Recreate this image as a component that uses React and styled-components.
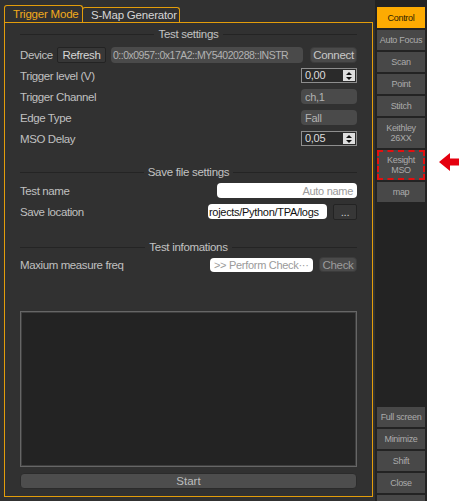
import React from 'react';
import styled, { createGlobalStyle } from 'styled-components';

const GlobalStyle = createGlobalStyle`
  html, body {
    margin: 0;
    padding: 0;
    background: #ffffff;
  }

  body {
    font-family: "Liberation Sans", Arial, sans-serif;
  }
`;

const ORANGE = '#e39d0b';

const Screen = styled.div`
  display: flex;
  width: 470px;
  height: 501px;
  overflow: hidden;
`;

const Main = styled.div`
  width: 375px;
  height: 501px;
  box-sizing: border-box;
  padding: 5px 2px 4px 4px;
  background: #313131;
  display: flex;
  flex-direction: column;
`;

const TabBar = styled.div`
  display: flex;
  align-items: flex-end;
  height: 17px;
  flex-shrink: 0;
`;

const Tab = styled.div`
  box-sizing: border-box;
  width: ${(p) => p.$width}px;
  height: ${(p) => (p.$active ? 17 : 15)}px;
  margin-left: ${(p) => (p.$active ? 0 : -1)}px;
  padding: ${(p) => (p.$active ? 1 : 0)}px 0 0 8px;
  border: 1px solid ${ORANGE};
  border-bottom: none;
  border-radius: 3px 3px 0 0;
  color: ${(p) => (p.$active ? '#f2aa1c' : '#d6d6d6')};
  font-size: 11.5px;
  letter-spacing: -0.2px;
  line-height: 14px;
  white-space: nowrap;
`;

const Pane = styled.div`
  flex: 1;
  box-sizing: border-box;
  border: 1px solid ${ORANGE};
  padding: 5px 15px 7px 15px;
  display: flex;
  flex-direction: column;
`;

const SectionHeader = styled.div`
  display: flex;
  align-items: center;
  gap: 4px;
  height: 12px;
  margin-top: ${(p) => p.$top || 0}px;
  color: #c2c2c2;
  font-size: 11.5px;
  letter-spacing: -0.3px;
  flex-shrink: 0;

  &::before,
  &::after {
    content: '';
    flex: 1;
    height: 1px;
    background: #242424;
  }
`;

const Rows = styled.div`
  display: flex;
  flex-direction: column;
  margin-top: ${(p) => p.$top || 0}px;
  flex-shrink: 0;
`;

const Row = styled.div`
  display: flex;
  align-items: center;
  height: 21px;
`;

const Label = styled.span`
  width: ${(p) => (p.$width ? `${p.$width}px` : 'auto')};
  margin-right: auto;
  color: #c0c0c0;
  font-size: 11.5px;
  letter-spacing: -0.4px;
  white-space: nowrap;
`;

const Button = styled.div`
  box-sizing: border-box;
  width: ${(p) => p.$width}px;
  height: ${(p) => p.$height || 16}px;
  margin-left: ${(p) => p.$gap || 0}px;
  display: flex;
  align-items: center;
  justify-content: center;
  background: ${(p) => (p.$dark ? '#373737' : '#4a4a4a')};
  border: 1px solid ${(p) => (p.$dark ? '#232323' : '#3c3c3c')};
  border-radius: ${(p) => (p.$dark ? 2 : 4)}px;
  color: ${(p) => p.$color || '#c8c8c8'};
  font-size: 11.5px;
  letter-spacing: -0.3px;
  white-space: nowrap;
`;

const Field = styled.div`
  box-sizing: border-box;
  width: ${(p) => (p.$width ? `${p.$width}px` : 'auto')};
  flex: ${(p) => (p.$width ? '0 0 auto' : 1)};
  height: ${(p) => p.$height || 15}px;
  margin-left: ${(p) => p.$gap || 0}px;
  display: flex;
  align-items: center;
  justify-content: ${(p) => (p.$right ? 'flex-end' : 'flex-start')};
  padding: 0 4px 0 ${(p) => (p.$pad ?? 4)}px;
  overflow: hidden;
  background: ${(p) => (p.$light ? '#ffffff' : '#4a4a4a')};
  border-radius: 4px;
  color: ${(p) => p.$color || '#b2b2b2'};
  font-size: ${(p) => p.$size || 11}px;
  letter-spacing: ${(p) => (p.$tight ? -0.5 : -0.3)}px;
  white-space: nowrap;
`;

const SpinBox = styled.div`
  box-sizing: border-box;
  width: 56px;
  height: 15px;
  display: flex;
  border: 1px solid #8e8e8e;
  background: #2a2a2a;
`;

const SpinValue = styled.span`
  flex: 1;
  padding-left: 3px;
  color: #dcdcdc;
  font-size: 11px;
  line-height: 13px;
  letter-spacing: -0.3px;
`;

const SpinButtons = styled.div`
  width: 12px;
  margin: 1px;
  display: flex;
  flex-direction: column;
  align-items: center;
  justify-content: center;
  gap: 2px;
  background: #dedede;
`;

const LogBox = styled.div`
  flex: 1;
  margin-top: 36px;
  box-sizing: border-box;
  background: #232323;
  border: 1px solid #666666;
  box-shadow: inset 0 0 0 1px #3e3e3e;
`;

const StartButton = styled.div`
  box-sizing: border-box;
  height: 16px;
  margin-top: 6px;
  display: flex;
  align-items: center;
  justify-content: center;
  background: #4d4d4d;
  border: 1px solid #2b2b2b;
  border-radius: 4px;
  color: #bdbdbd;
  font-size: 11.5px;
  flex-shrink: 0;
`;

const Sidebar = styled.div`
  width: 52px;
  height: 501px;
  box-sizing: border-box;
  padding: 7px 2px 0;
  background: #232323;
  display: flex;
  flex-direction: column;
  gap: 2px;
  overflow: hidden;
  flex-shrink: 0;
`;

const SideButton = styled.div`
  box-sizing: border-box;
  height: ${(p) => p.$height || 20}px;
  flex-shrink: 0;
  display: flex;
  align-items: center;
  justify-content: center;
  text-align: center;
  background: ${(p) => (p.$active ? '#fdab02' : '#484848')};
  color: ${(p) => (p.$active ? '#2e2200' : '#ababab')};
  border: ${(p) => (p.$marked ? '2px dashed #e21010' : 'none')};
  font-size: 9px;
  line-height: 10px;
  letter-spacing: -0.3px;
`;

const BottomGroup = styled.div`
  margin-top: 203px;
  display: flex;
  flex-direction: column;
  gap: 2px;
  flex-shrink: 0;
`;

const Annotation = styled.div`
  padding: 153px 0 0 12px;
`;

const SpinArrows = () => (
  <>
    <svg width="6" height="3" viewBox="0 0 6 3">
      <polygon points="3,0 6,3 0,3" fill="#111" />
    </svg>
    <svg width="6" height="3" viewBox="0 0 6 3">
      <polygon points="0,0 6,0 3,3" fill="#111" />
    </svg>
  </>
);

const Spin = ({ value }) => (
  <SpinBox>
    <SpinValue>{value}</SpinValue>
    <SpinButtons>
      <SpinArrows />
    </SpinButtons>
  </SpinBox>
);

const App = () => (
  <Screen>
    <GlobalStyle />
    <Main>
      <TabBar>
        <Tab $active $width={79}>Trigger Mode</Tab>
        <Tab $width={98}>S-Map Generator</Tab>
      </TabBar>
      <Pane>
        <SectionHeader>Test settings</SectionHeader>
        <Rows $top={4}>
          <Row>
            <Label $width={37}>Device</Label>
            <Button $width={49} $dark $color="#d6d6d6">Refresh</Button>
            <Field $gap={5} $height={16} $pad={2} $size={10.5} $tight>0::0x0957::0x17A2::MY54020288::INSTR</Field>
            <Button $width={47} $gap={7}>Connect</Button>
          </Row>
          <Row>
            <Label>Trigger level (V)</Label>
            <Spin value="0,00" />
          </Row>
          <Row>
            <Label>Trigger Channel</Label>
            <Field $width={56}>ch,1</Field>
          </Row>
          <Row>
            <Label>Edge Type</Label>
            <Field $width={56}>Fall</Field>
          </Row>
          <Row>
            <Label>MSO Delay</Label>
            <Spin value="0,05" />
          </Row>
        </Rows>

        <SectionHeader $top={17}>Save file settings</SectionHeader>
        <Rows $top={2}>
          <Row>
            <Label>Test name</Label>
            <Field $width={140} $light $right $color="#9a9a9a">Auto name</Field>
          </Row>
          <Row>
            <Label>Save location</Label>
            <Field $width={119} $height={15} $light $pad={1} $color="#111111">rojects/Python/TPA/logs</Field>
            <Button $width={24} $gap={6} $dark>...</Button>
          </Row>
        </Rows>

        <SectionHeader $top={19}>Test infomations</SectionHeader>
        <Rows $top={1}>
          <Row>
            <Label>Maxium measure freq</Label>
            <Field $width={103} $height={14} $light $color="#9a9a9a">&gt;&gt; Perform Check···</Field>
            <Button $width={38} $height={15} $gap={6} $color="#9c9c9c">Check</Button>
          </Row>
        </Rows>

        <LogBox />
        <StartButton>Start</StartButton>
      </Pane>
    </Main>

    <Sidebar>
      <SideButton $active $height={21}>Control</SideButton>
      <SideButton>Auto Focus</SideButton>
      <SideButton>Scan</SideButton>
      <SideButton>Point</SideButton>
      <SideButton>Stitch</SideButton>
      <SideButton $height={30}>Keithley<br />26XX</SideButton>
      <SideButton $height={30} $marked>Kesight<br />MSO</SideButton>
      <SideButton>map</SideButton>
      <BottomGroup>
        <SideButton>Full screen</SideButton>
        <SideButton>Minimize</SideButton>
        <SideButton>Shift</SideButton>
        <SideButton>Close</SideButton>
        <SideButton />
      </BottomGroup>
    </Sidebar>

    <Annotation>
      <svg width="20" height="18" viewBox="0 0 20 18">
        <polygon points="0,9 11,0 11,5.5 20,5.5 20,12.5 11,12.5 11,18" fill="#e5000f" />
      </svg>
    </Annotation>
  </Screen>
);

export default App;
